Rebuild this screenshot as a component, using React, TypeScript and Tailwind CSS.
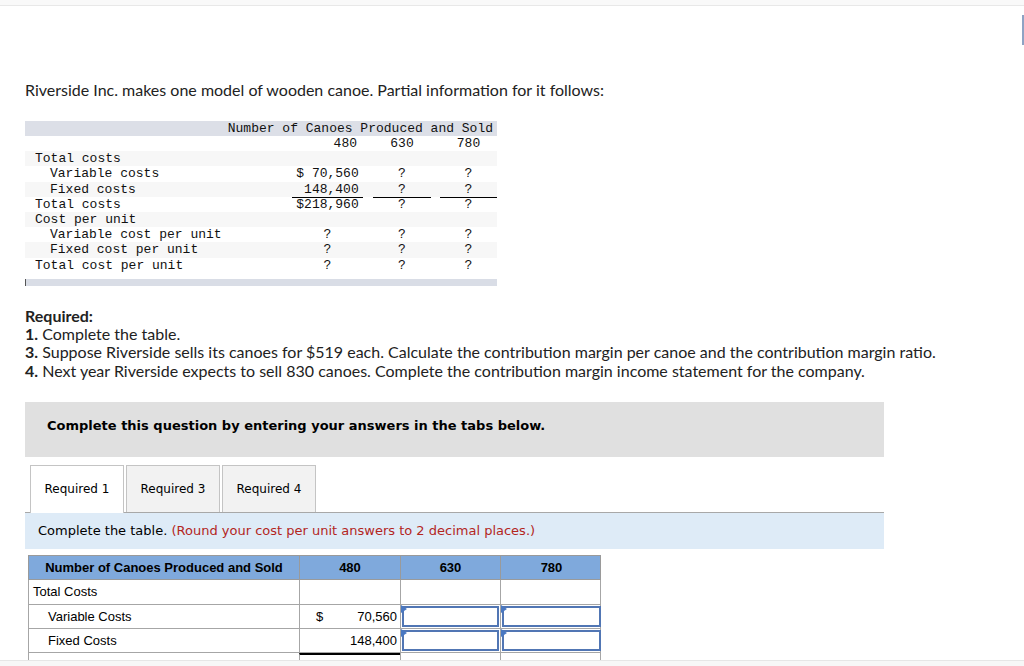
import React from "react";

const mono = { fontFamily: '"Liberation Mono", "DejaVu Sans Mono", monospace' };

type MRow = { label: string; indent?: boolean; a?: string; b?: string; c?: string; underline?: boolean };

const monoRows: MRow[] = [
  { label: "Total costs" },
  { label: "Variable costs", indent: true, a: "$ 70,560", b: "?", c: "?" },
  { label: "Fixed costs", indent: true, a: " 148,400", b: "?", c: "?", underline: true },
  { label: "Total costs", a: "$218,960", b: "?", c: "?" },
  { label: "Cost per unit" },
  { label: "Variable cost per unit", indent: true, a: "?", b: "?", c: "?" },
  { label: "Fixed cost per unit", indent: true, a: "?", b: "?", c: "?" },
  { label: "Total cost per unit", a: "?", b: "?", c: "?" },
];

function MonoTable() {
  return (
    <div className="w-[472px] text-[13px] text-[#111]" style={mono}>
      <div className="h-[15px] bg-[#dcdfe7] text-right pr-[4px] leading-[15px] whitespace-pre">
        Number of Canoes Produced and Sold
      </div>
      <div className="grid grid-cols-[267px_71px_10px_58px_9px_57px] h-[15.2px] leading-[15.2px]">
        <div />
        <div className="text-right pr-[6px]">480</div>
        <div />
        <div className="text-center">630</div>
        <div />
        <div className="text-center">780</div>
      </div>
      {monoRows.map((r, i) => (
        <div
          key={i}
          className={`grid grid-cols-[267px_71px_10px_58px_9px_57px] h-[15.2px] leading-[15.2px] ${
            i % 2 === 0 ? "bg-[#f7f7f7]" : "bg-white"
          }`}
        >
          <div className={`whitespace-pre ${r.indent ? "pl-[25px]" : "pl-[10px]"}`}>{r.label}</div>
          <div className={`text-center whitespace-pre ${r.underline ? "border-b border-black" : ""}`}>{r.a}</div>
          <div />
          <div className={`text-center ${r.underline ? "border-b border-black" : ""}`}>{r.b}</div>
          <div />
          <div className={`text-center ${r.underline ? "border-b border-black" : ""}`}>{r.c}</div>
        </div>
      ))}
      <div className="mt-[6px] h-[7px] bg-[#d9dde6] border-l border-[#555]" />
    </div>
  );
}

function Triangle() {
  return (
    <svg className="absolute left-0 top-0" width="6" height="8" viewBox="0 0 6 8">
      <polygon points="0,0 6,4 0,8" fill="#4a78c2" />
    </svg>
  );
}

function InputCell() {
  return (
    <div className="relative border-l border-[#a6a6a6] p-[1px]">
      <div className="h-full border-2 border-[#5176b4] bg-white" />
      <Triangle />
    </div>
  );
}

export default function App() {
  const sans = { fontFamily: 'Lato, "Open Sans", sans-serif' };
  const tahoma = { fontFamily: '"DejaVu Sans", Verdana, sans-serif' };
  const arial = { fontFamily: '"Liberation Sans", Arial, sans-serif' };
  return (
    <div className="relative w-[1024px] h-[666px] overflow-hidden bg-white">
      <div className="h-[6px] bg-[#f9f9f9] border-b border-[#e8e8e8]" />
      <div className="absolute right-0 top-[15px] w-[2px] h-[30px] bg-[#8ea3c4]" />

      <div className="pl-[25px] pt-[75px]">
        <p className="text-[16px] leading-[18px] text-[#222]" style={sans}>
          Riverside Inc. makes one model of wooden canoe. Partial information for it follows:
        </p>

        <div className="mt-[22px]">
          <MonoTable />
        </div>

        <div className="mt-[21px] text-[16px] leading-[18.3px] text-[#222]" style={sans}>
          <p className="font-bold">Required:</p>
          <p>
            <b>1.</b> Complete the table.
          </p>
          <p>
            <b>3.</b> Suppose Riverside sells its canoes for $519 each. Calculate the contribution margin per canoe and the contribution margin ratio.
          </p>
          <p>
            <b>4.</b> Next year Riverside expects to sell 830 canoes. Complete the contribution margin income statement for the company.
          </p>
        </div>

        <div className="mt-[22px] w-[859px] h-[55px] bg-[#e0e0e0] pl-[22px] pt-[14px]" style={tahoma}>
          <p className="text-[13px] font-bold leading-[20px] text-black">
            Complete this question by entering your answers in the tabs below.
          </p>
        </div>

        <div className="mt-[7px] w-[859px]" style={tahoma}>
          <div className="flex items-end gap-[2px] pl-[5px] border-b border-[#a8a8a8] relative">
            <div className="w-[94px] h-[48px] bg-white border border-[#c4c4c4] border-b-0 flex items-center justify-center text-[12px] text-black relative top-[1px]">
              Required 1
            </div>
            <div className="w-[94px] h-[47px] bg-[#f2f2f2] border border-[#c4c4c4] border-b-0 flex items-center justify-center text-[12px] text-black">
              Required 3
            </div>
            <div className="w-[94px] h-[47px] bg-[#f2f2f2] border border-[#c4c4c4] border-b-0 flex items-center justify-center text-[12px] text-black">
              Required 4
            </div>
          </div>
          <div className="h-[36px] bg-[#deebf7] pl-[13px] flex items-center text-[13px] text-black">
            Complete the table.&nbsp;<span className="text-[#b3261e]">(Round your cost per unit answers to 2 decimal places.)</span>
          </div>
        </div>

        <div className="mt-[6px] ml-[3px] w-[573px] text-[13px] text-black" style={arial}>
          <div className="grid grid-cols-[270px_101px_100px_102px] h-[25px] bg-[#7fa9dc] border border-[#9a9a9a] font-bold">
            <div className="flex items-center justify-center">Number of Canoes Produced and Sold</div>
            <div className="flex items-center justify-center border-l border-[#9a9a9a]">480</div>
            <div className="flex items-center justify-center border-l border-[#9a9a9a]">630</div>
            <div className="flex items-center justify-center border-l border-[#9a9a9a]">780</div>
          </div>
          <div className="grid grid-cols-[270px_101px_100px_102px] h-[25px] border-x border-b border-[#a6a6a6]">
            <div className="flex items-center pl-[4px]">Total Costs</div>
            <div className="border-l border-[#a6a6a6]" />
            <div className="border-l border-[#a6a6a6]" />
            <div className="border-l border-[#a6a6a6]" />
          </div>
          <div className="grid grid-cols-[270px_101px_100px_102px] h-[24px] border-x border-b border-[#a6a6a6]">
            <div className="flex items-center pl-[19px]">Variable Costs</div>
            <div className="flex items-center justify-between border-l border-[#a6a6a6] pl-[16px] pr-[3px]">
              <span>$</span>
              <span>70,560</span>
            </div>
            <InputCell />
            <InputCell />
          </div>
          <div className="grid grid-cols-[270px_101px_100px_102px] h-[24px] border-x border-b border-[#a6a6a6]">
            <div className="flex items-center pl-[19px]">Fixed Costs</div>
            <div className="flex items-center justify-end border-l border-[#a6a6a6] pr-[3px]">
              <span>148,400</span>
            </div>
            <InputCell />
            <InputCell />
          </div>
          <div className="grid grid-cols-[270px_101px_100px_102px] h-[24px] border-x border-[#a6a6a6]">
            <div />
            <div className="flex items-center justify-between border-l border-t-2 border-[#a6a6a6] border-t-black pl-[16px] pr-[3px] pt-[6px]">
              <span>$</span>
              <span>218,960</span>
            </div>
            <div className="border-l border-[#a6a6a6]" />
            <div className="border-l border-[#a6a6a6]" />
          </div>
        </div>
      </div>

      <div className="absolute left-0 right-0 bottom-0 h-[6px] bg-[#f7f7f7] border-t border-[#e6e6e6]" />
    </div>
  );
}
